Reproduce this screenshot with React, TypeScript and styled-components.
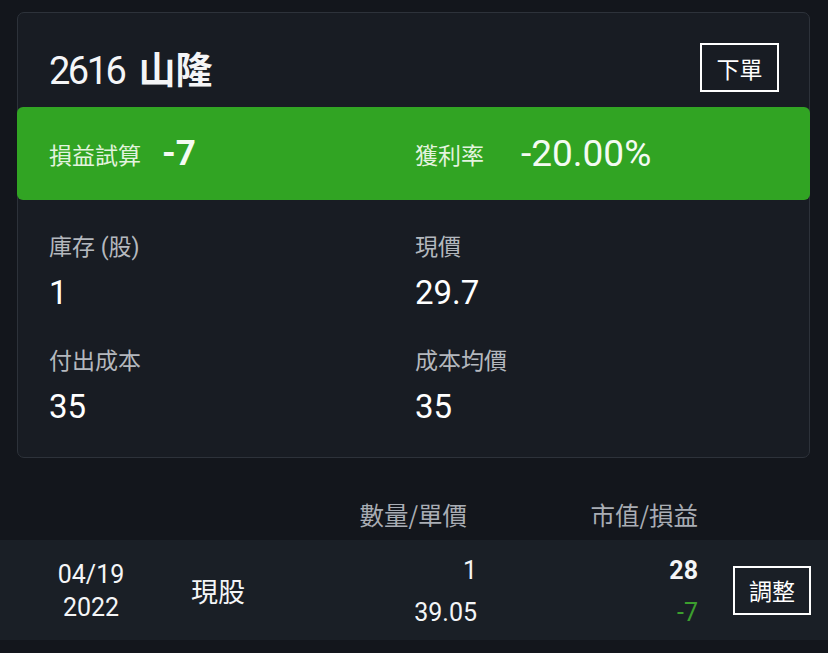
import styled, { createGlobalStyle } from "styled-components";

const GlobalStyle = createGlobalStyle`
  html, body {
    margin: 0;
    padding: 0;
    background: #13161c;
  }
  body {
    font-family: Roboto, "Noto Sans CJK TC", sans-serif;
    color: #f4f5f7;
  }
`;

const Page = styled.div`
  width: 828px;
  height: 653px;
  overflow: hidden;
  padding-top: 12px;
  box-sizing: border-box;
`;

const Card = styled.section`
  margin: 0 18px 0 17px;
  background: #181c23;
  border: 1.5px solid #2d323a;
  border-radius: 7px;
  padding-bottom: 30px;
`;

const CardHeader = styled.div`
  height: 94px;
  box-sizing: border-box;
  display: flex;
  align-items: center;
  justify-content: space-between;
  padding: 15px 30px 0 31px;
`;

const Title = styled.h1`
  margin: 0;
  display: flex;
  align-items: baseline;
  gap: 14px;
  font-weight: 400;
`;

const Code = styled.span`
  font-size: 38px;
  letter-spacing: -2.5px;
`;

const Name = styled.span`
  font-size: 37px;
  font-weight: 700;
`;

const OutlineButton = styled.button<{ $w: number; $h: number }>`
  width: ${(p) => p.$w}px;
  height: ${(p) => p.$h}px;
  background: transparent;
  border: 2px solid #ffffff;
  color: #ffffff;
  font-family: "Noto Sans CJK TC", sans-serif;
  font-size: 23px;
  padding: 0;
  display: flex;
  align-items: center;
  justify-content: center;
`;

const ProfitBand = styled.div`
  height: 93px;
  margin: 0 -1px;
  background: #31a423;
  border-radius: 6px;
  display: grid;
  grid-template-columns: 366px 1fr;
  align-items: center;
  padding-left: 32px;
`;

const BandItem = styled.div<{ $gap: number }>`
  display: flex;
  align-items: center;
  gap: ${(p) => p.$gap}px;
`;

const BandLabel = styled.span`
  font-family: "Noto Sans CJK TC", sans-serif;
  font-size: 23px;
  color: #e3f3df;
`;

const BandValue = styled.span<{ $bold?: boolean }>`
  font-size: ${(p) => (p.$bold ? 35 : 37)}px;
  font-weight: ${(p) => (p.$bold ? 700 : 400)};
  color: #f4fbf2;
`;

const StatGrid = styled.div`
  display: grid;
  grid-template-columns: 366px 1fr;
  row-gap: 34px;
  padding: 33px 0 0 31px;
`;

const Stat = styled.div`
  display: flex;
  flex-direction: column;
  gap: 10px;
`;

const StatLabel = styled.span`
  font-family: Roboto, "Noto Sans CJK TC", sans-serif;
  font-size: 23px;
  line-height: 30px;
  color: #b4b8be;
`;

const StatValue = styled.span`
  font-size: 33px;
  line-height: 40px;
  color: #ffffff;
`;

const TableHead = styled.div`
  margin-top: 42px;
  height: 30px;
  display: grid;
  grid-template-columns: 182px 1fr 130px 221px 113px;
  padding-right: 17px;
  font-family: "Noto Sans CJK TC", sans-serif;
  font-size: 24.5px;
  line-height: 30px;
  color: #a9adb4;
  margin-bottom: 10px;
`;

const HeadCell = styled.span<{ $pad?: number }>`
  text-align: right;
  padding-right: ${(p) => p.$pad ?? 0}px;
  white-space: nowrap;
`;

const Row = styled.div`
  height: 100px;
  background: #1a1f26;
  display: grid;
  grid-template-columns: 182px 1fr 130px 221px 113px;
  align-items: center;
  padding-right: 17px;
`;

const DateCell = styled.div`
  display: flex;
  flex-direction: column;
  align-items: center;
  font-size: 25px;
  line-height: 33px;
  padding-top: 2px;
`;

const TypeCell = styled.div`
  padding-left: 9px;
  font-family: "Noto Sans CJK TC", sans-serif;
  font-size: 27px;
`;

const NumCell = styled.div`
  display: flex;
  flex-direction: column;
  align-items: flex-end;
  gap: 8px;
  padding-top: 4px;
`;

const Num = styled.span<{ $bold?: boolean; $tone?: string }>`
  font-size: 25px;
  line-height: 34px;
  font-weight: ${(p) => (p.$bold ? 700 : 400)};
  color: ${(p) => p.$tone ?? "#f4f5f7"};
`;

const ActionCell = styled.div`
  display: flex;
  justify-content: flex-end;
`;

export default function App() {
  return (
    <>
      <GlobalStyle />
      <Page>
        <Card>
          <CardHeader>
            <Title>
              <Code>2616</Code>
              <Name>山隆</Name>
            </Title>
            <OutlineButton $w={79} $h={49}>下單</OutlineButton>
          </CardHeader>
          <ProfitBand>
            <BandItem $gap={21}>
              <BandLabel>損益試算</BandLabel>
              <BandValue $bold>-7</BandValue>
            </BandItem>
            <BandItem $gap={37}>
              <BandLabel>獲利率</BandLabel>
              <BandValue>-20.00%</BandValue>
            </BandItem>
          </ProfitBand>
          <StatGrid>
            <Stat>
              <StatLabel>庫存 (股)</StatLabel>
              <StatValue>1</StatValue>
            </Stat>
            <Stat>
              <StatLabel>現價</StatLabel>
              <StatValue>29.7</StatValue>
            </Stat>
            <Stat>
              <StatLabel>付出成本</StatLabel>
              <StatValue>35</StatValue>
            </Stat>
            <Stat>
              <StatLabel>成本均價</StatLabel>
              <StatValue>35</StatValue>
            </Stat>
          </StatGrid>
        </Card>
        <TableHead>
          <span />
          <span />
          <HeadCell $pad={10}>數量/單價</HeadCell>
          <HeadCell>市值/損益</HeadCell>
          <span />
        </TableHead>
        <Row>
          <DateCell>
            <span>04/19</span>
            <span>2022</span>
          </DateCell>
          <TypeCell>現股</TypeCell>
          <NumCell>
            <Num>1</Num>
            <Num>39.05</Num>
          </NumCell>
          <NumCell>
            <Num $bold>28</Num>
            <Num $tone="#3c9f2e">-7</Num>
          </NumCell>
          <ActionCell>
            <OutlineButton $w={78} $h={49}>調整</OutlineButton>
          </ActionCell>
        </Row>
      </Page>
    </>
  );
}
